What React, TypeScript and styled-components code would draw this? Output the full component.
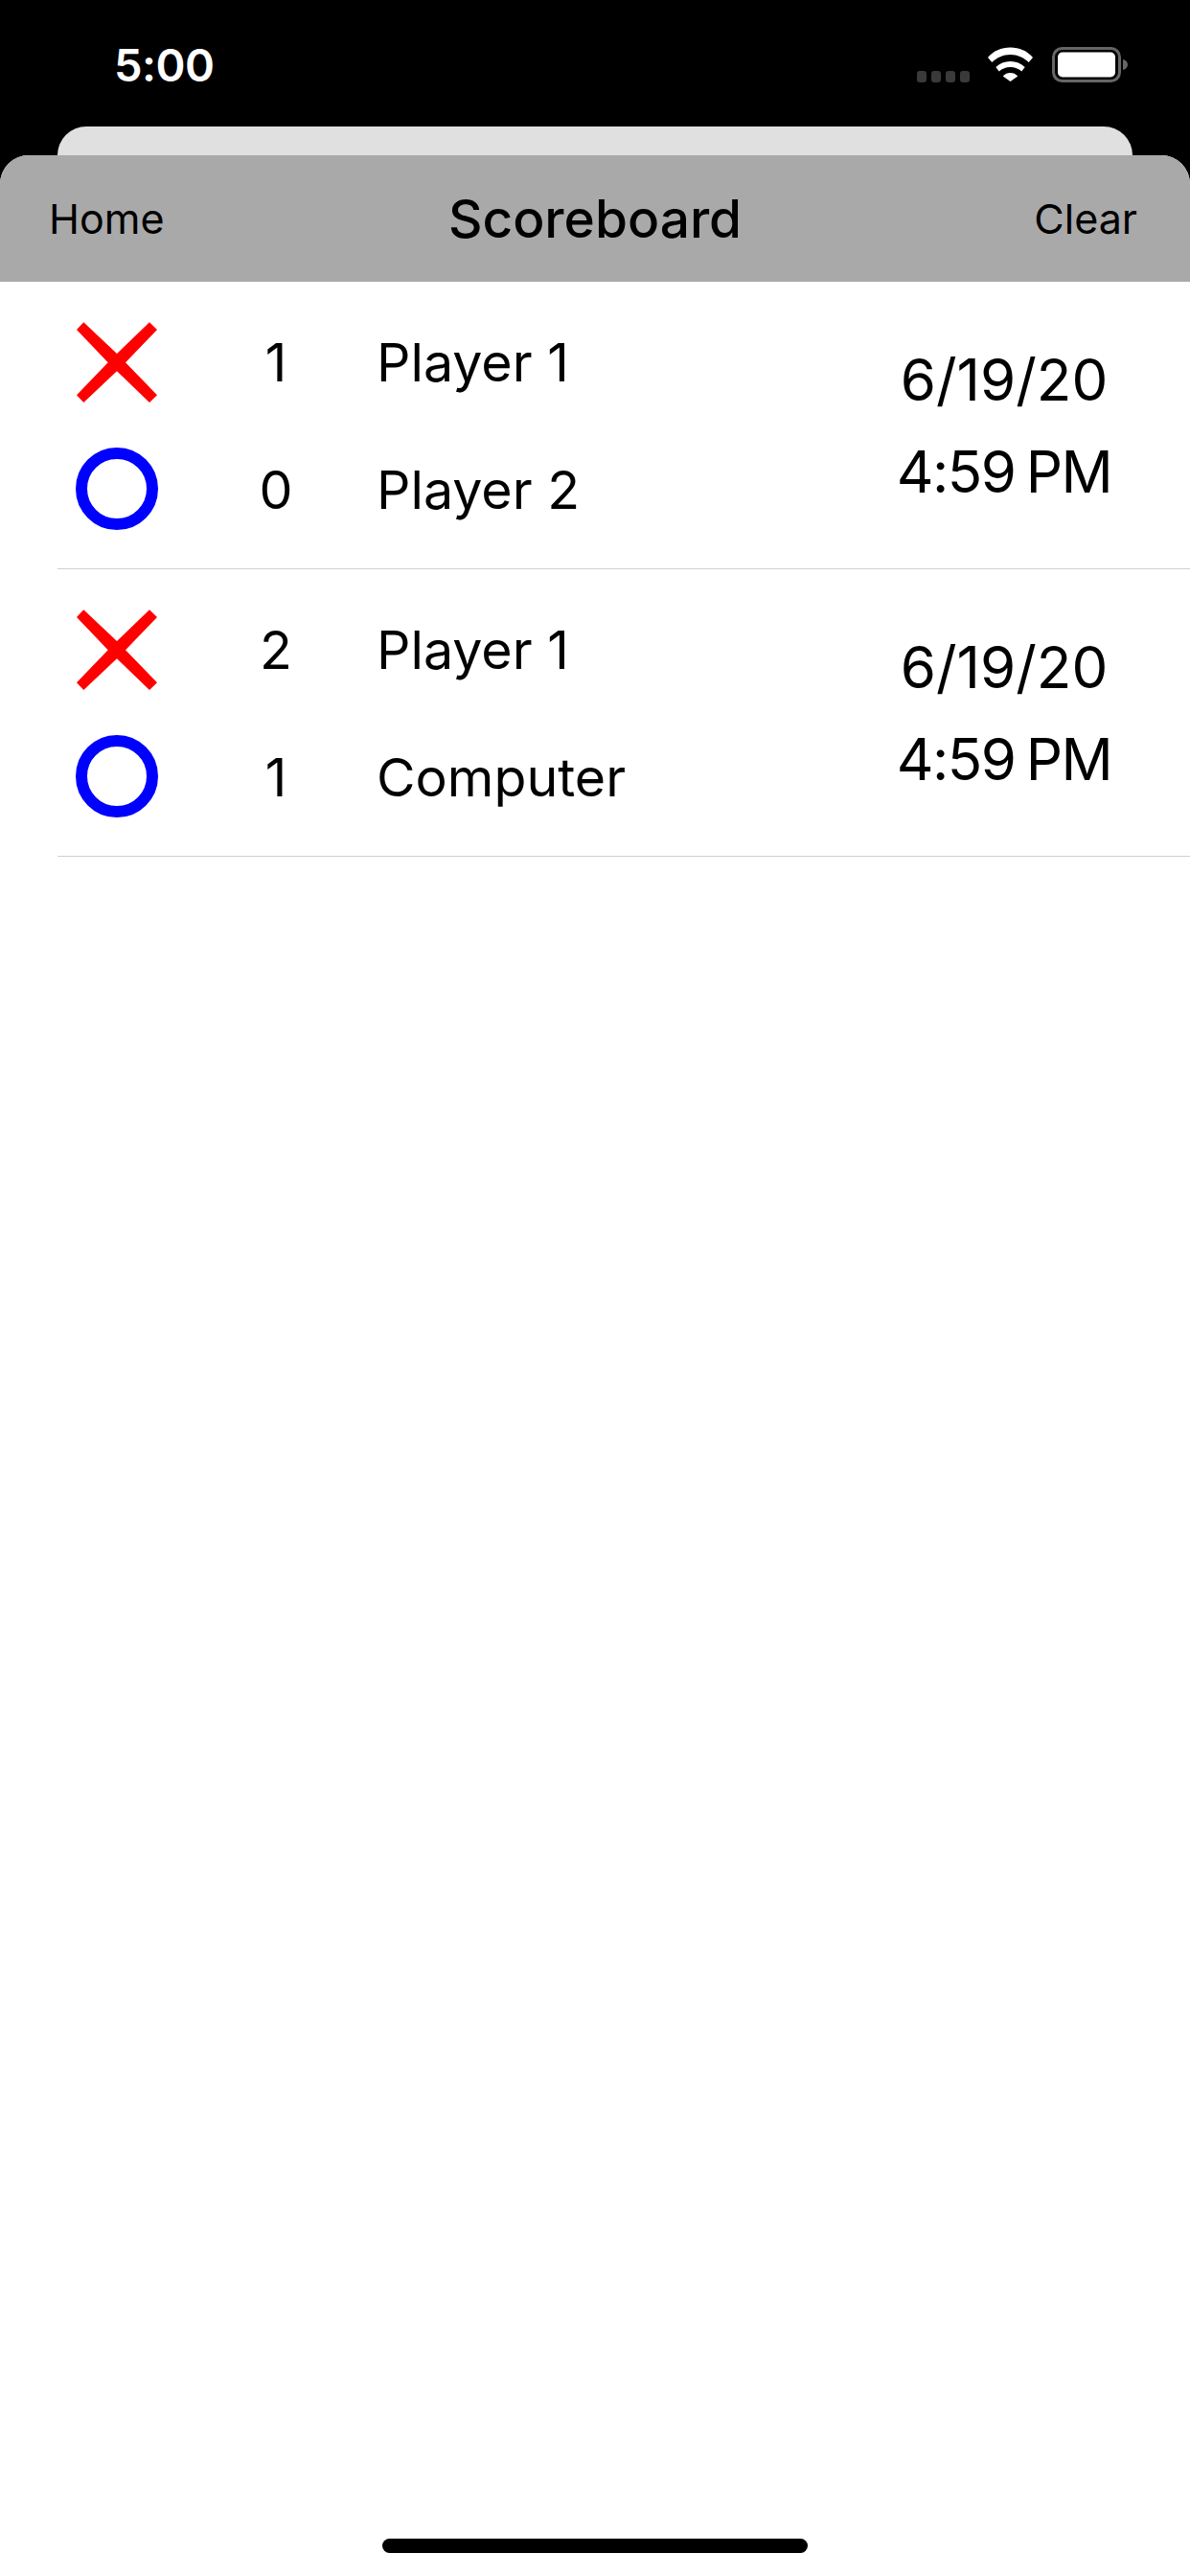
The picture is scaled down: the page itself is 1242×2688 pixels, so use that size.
import React from 'react';
import styled, { createGlobalStyle } from 'styled-components';

const Global = createGlobalStyle`
  html, body { margin: 0; padding: 0; background: #000; }
  body { font-family: Inter, "Liberation Sans", sans-serif; color: #000; }
`;

const Page = styled.div`
  width: 1242px;
  height: 2688px;
  position: relative;
  overflow: hidden;
  background: #000;
  display: flex;
  flex-direction: column;
`;

const StatusBar = styled.div`
  height: 132px;
  flex: none;
  display: flex;
  justify-content: space-between;
  align-items: flex-start;
  padding: 41px 64px 0 119px;
  box-sizing: border-box;
`;

const Clock = styled.div`
  color: #fff;
  font-size: 47px;
  font-weight: 600;
  line-height: 54px;
  letter-spacing: -0.5px;
`;

const StatusIcons = styled.div`
  display: flex;
  align-items: flex-start;
  gap: 19px;
  padding-top: 8px;
`;

const SignalIcon = styled.svg`
  width: 55px;
  height: 12px;
  margin-top: 25px;
`;

const WifiIcon = styled.svg`
  width: 48px;
  height: 36px;
`;

const BatteryIcon = styled.svg`
  width: 80px;
  height: 38px;
`;

const BackCard = styled.div`
  flex: none;
  height: 30px;
  margin: 0 60px;
  background: #e0e0e0;
  border-radius: 30px 30px 0 0;
`;

const Sheet = styled.div`
  flex: 1;
  background: #fff;
  border-radius: 30px 30px 0 0;
  overflow: hidden;
`;

const NavBar = styled.div`
  height: 132px;
  background: #a9a9a9;
  display: grid;
  grid-template-columns: 1fr auto 1fr;
  align-items: center;
  padding: 0 53px;
  box-sizing: border-box;
`;

const NavButton = styled.div<{ $end?: boolean }>`
  font-size: 43px;
  line-height: 50px;
  text-align: ${p => (p.$end ? 'right' : 'left')};
  margin: ${p => (p.$end ? '0 2px 0 0' : '0 0 0 -2px')};
`;

const NavTitle = styled.div`
  font-size: 55px;
  font-weight: 500;
  line-height: 60px;
`;

const Row = styled.div`
  margin-left: 60px;
  height: 300px;
  box-sizing: border-box;
  border-bottom: 1.5px solid #d0d0d0;
  display: flex;
  align-items: center;
`;

const Players = styled.div`
  display: flex;
  flex-direction: column;
  gap: 47px;
  flex: 1;
`;

const PlayerRow = styled.div`
  height: 86px;
  display: flex;
  align-items: center;
  font-size: 55.5px;
`;

const Mark = styled.svg`
  width: 86px;
  height: 87px;
  margin-left: 19px;
  flex: none;
`;

const Score = styled.div`
  width: 90px;
  margin: 0 0 0 78px;
  text-align: center;
`;

const Name = styled.div`
  margin: 0 0 0 60px;
`;

const DateBlock = styled.div`
  width: 240px;
  margin-right: 74px;
  font-size: 60px;
  line-height: 96px;
  text-align: center;
  white-space: nowrap;
  flex: none;
`;

const TimeLine = styled.div`
  margin: 0 -20px;
  letter-spacing: -1.5px;
  word-spacing: -4px;
`;

const HomeIndicator = styled.div`
  position: absolute;
  left: 399px;
  bottom: 24px;
  width: 444px;
  height: 15px;
  border-radius: 8px;
  background: #000;
`;

const Signal = () => (
  <SignalIcon viewBox="0 0 55 12">
    {[0, 15, 30, 45].map(x => (
      <rect key={x} x={x} y="0" width="10" height="12" rx="3" fill="#3a3a3a" />
    ))}
  </SignalIcon>
);

const Wifi = () => (
  <WifiIcon viewBox="0 0 48 36">
    <path d="M0 11C6 4 14 .5 23.500 .5S41 4 47 11L42.700 16C37.500 11 31 8 23.500 8S9.500 11 4.300 16Z" fill="#fff" />
    <path d="M8.300 21C12.500 17 17.500 15 23.500 15S34.500 17 38.700 21L35.300 25.500C32 22.500 28 21 23.500 21S15 22.500 11.700 25.500Z" fill="#fff" />
    <path d="M15.700 30.500C18 28 20.500 27 23.500 27S29 28 31.300 30.500L23.500 36Z" fill="#fff" />
  </WifiIcon>
);

const Battery = () => (
  <BatteryIcon viewBox="0 0 80 38">
    <rect x="1.500" y="1.500" width="69" height="34" rx="9" fill="none" stroke="#666" strokeWidth="3" />
    <rect x="6" y="5.500" width="60" height="26" rx="5" fill="#fff" />
    <path d="M74 13C77 13.500 79 16 79 18.500S77 23.500 74 24Z" fill="#666" />
  </BatteryIcon>
);

const XMark = () => (
  <Mark viewBox="0 0 86 87">
    <path d="M1 10L8.300 2.250L43 35L77 2.250L85 10L52 44.250L85 78.250L77 86L43 53.250L8.300 86L1 78.250L33.700 44.250Z" fill="#ff0000" />
  </Mark>
);

const OMark = () => (
  <Mark viewBox="0 0 86 87">
    <circle cx="43" cy="43" r="37" fill="none" stroke="#0000ff" strokeWidth="12" />
  </Mark>
);

const games = [
  { a: ['1', 'Player 1'], b: ['0', 'Player 2'] },
  { a: ['2', 'Player 1'], b: ['1', 'Computer'] },
];

export default function App() {
  return (
    <Page>
      <Global />
      <StatusBar>
        <Clock>5:00</Clock>
        <StatusIcons>
          <Signal />
          <Wifi />
          <Battery />
        </StatusIcons>
      </StatusBar>
      <BackCard />
      <Sheet>
        <NavBar>
          <NavButton>Home</NavButton>
          <NavTitle>Scoreboard</NavTitle>
          <NavButton $end>Clear</NavButton>
        </NavBar>
        {games.map((g, i) => (
          <Row key={i}>
            <Players>
              <PlayerRow>
                <XMark />
                <Score>{g.a[0]}</Score>
                <Name>{g.a[1]}</Name>
              </PlayerRow>
              <PlayerRow>
                <OMark />
                <Score>{g.b[0]}</Score>
                <Name>{g.b[1]}</Name>
              </PlayerRow>
            </Players>
            <DateBlock>
              <div>6/19/20</div>
              <TimeLine>4:59 PM</TimeLine>
            </DateBlock>
          </Row>
        ))}
      </Sheet>
      <HomeIndicator />
    </Page>
  );
}
